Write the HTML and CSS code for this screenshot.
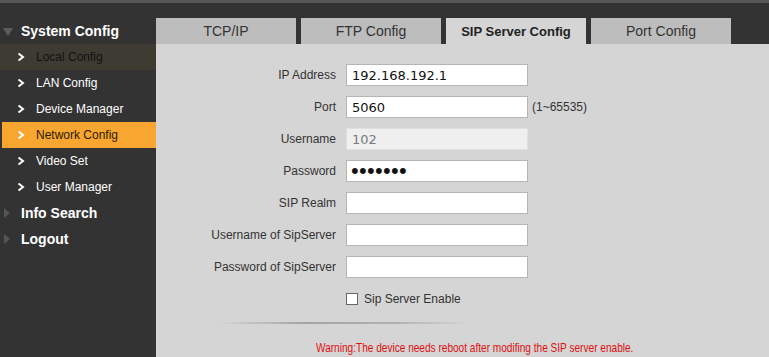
FILE: index.html
```html
<!DOCTYPE html>
<html lang="en">
<head>
    <meta charset="UTF-8" />
    <title>SIP Server Config</title>
    <link rel="stylesheet" href="styles.css">
</head>
<body>

<div class="topbar"></div>

<div class="layout">
    <nav class="sidebar">
        <div class="group open">
            <span class="tri-down"></span>System Config
        </div>
        <a class="item current" href="#"><svg class="chev" width="8" height="10" viewBox="0 0 8 10"><polyline points="1.5,1.5 6,5 1.5,8.5" /></svg>Local Config</a>
        <a class="item" href="#"><svg class="chev" width="8" height="10" viewBox="0 0 8 10"><polyline points="1.5,1.5 6,5 1.5,8.5" /></svg>LAN Config</a>
        <a class="item" href="#"><svg class="chev" width="8" height="10" viewBox="0 0 8 10"><polyline points="1.5,1.5 6,5 1.5,8.5" /></svg>Device Manager</a>
        <a class="item active" href="#"><svg class="chev" width="8" height="10" viewBox="0 0 8 10"><polyline points="1.5,1.5 6,5 1.5,8.5" /></svg>Network Config</a>
        <a class="item" href="#"><svg class="chev" width="8" height="10" viewBox="0 0 8 10"><polyline points="1.5,1.5 6,5 1.5,8.5" /></svg>Video Set</a>
        <a class="item" href="#"><svg class="chev" width="8" height="10" viewBox="0 0 8 10"><polyline points="1.5,1.5 6,5 1.5,8.5" /></svg>User Manager</a>
        <div class="group">
            <span class="tri-right"></span>Info Search
        </div>
        <div class="group">
            <span class="tri-right"></span>Logout
        </div>
    </nav>

    <main class="main">
        <div class="tabs">
            <button class="tab">TCP/IP</button>
            <button class="tab">FTP Config</button>
            <button class="tab active">SIP Server Config</button>
            <button class="tab">Port Config</button>
        </div>

        <div class="panel">
            <form class="sip-form">
                <label for="ip">IP Address</label>
                <input type="text" id="ip" value="192.168.192.1" />
                <span></span>

                <label for="port">Port</label>
                <input type="text" id="port" value="5060" />
                <span class="hint">(1~65535)</span>

                <label for="user">Username</label>
                <input type="text" id="user" value="102" disabled />
                <span></span>

                <label for="pass">Password</label>
                <input type="password" id="pass" class="pass" value="1234567" />
                <span></span>

                <label for="realm">SIP Realm</label>
                <input type="text" id="realm" />
                <span></span>

                <label for="suser">Username of SipServer</label>
                <input type="text" id="suser" />
                <span></span>

                <label for="spass">Password of SipServer</label>
                <input type="text" id="spass" />
                <span></span>

                <span></span>
                <label class="check"><input type="checkbox" /> Sip Server Enable</label>
                <span></span>
            </form>

            <div class="divider"></div>

            <p class="warning">Warning:The device needs reboot after modifing the SIP server enable.</p>
        </div>
    </main>
</div>

</body>
</html>
```

FILE: styles.css
```css
html, body {
    height: 100%;
}
body {
    margin: 0;
    font-family: "Liberation Sans", Arial, sans-serif;
    font-size: 12px;
    background-color: #333333;
    color: #222;
    display: flex;
    flex-direction: column;
    overflow: hidden;
}
.topbar {
    height: 3px;
    background-color: #585858;
}
.layout {
    flex: 1;
    display: flex;
}

/* sidebar */
.sidebar {
    width: 156px;
    padding-top: 15px;
    flex-shrink: 0;
}
.group {
    height: 26px;
    display: flex;
    align-items: center;
    padding-left: 21px;
    position: relative;
    color: #fff;
    font-size: 14px;
    font-weight: bold;
}
.tri-down {
    position: absolute;
    left: 3px;
    top: 10px;
    width: 0;
    height: 0;
    border-left: 5px solid transparent;
    border-right: 5px solid transparent;
    border-top: 8px solid #5e5e5e;
}
.tri-right {
    position: absolute;
    left: 4px;
    top: 8px;
    width: 0;
    height: 0;
    border-top: 5px solid transparent;
    border-bottom: 5px solid transparent;
    border-left: 6px solid #555;
}
.item {
    height: 26px;
    display: flex;
    align-items: center;
    padding-left: 17px;
    color: #fff;
    text-decoration: none;
    font-size: 12px;
}
.item .chev {
    margin-right: 11px;
}
.chev polyline {
    fill: none;
    stroke: #fff;
    stroke-width: 2;
}
.item.current {
    background-color: #3e3c32;
    color: #111;
}
.item.active {
    background-color: #f9a630;
    color: #2a1a00;
    margin-left: 2px;
    padding-left: 15px;
}

/* main */
.main {
    flex: 1;
    display: flex;
    flex-direction: column;
    padding-top: 15px;
}
.tabs {
    display: flex;
    gap: 5px;
    height: 26px;
}
.tab {
    width: 140px;
    border: none;
    padding: 0;
    background-color: #bdbdbd;
    color: #333;
    font-family: "Liberation Sans", Arial, sans-serif;
    font-size: 14px;
    cursor: pointer;
}
.tab.active {
    background-color: #d5d5d5;
    color: #222;
    font-weight: bold;
    font-size: 13px;
}
.panel {
    flex: 1;
    background-color: #d5d5d5;
    padding-top: 20px;
}
.sip-form {
    display: grid;
    grid-template-columns: 180px 182px auto;
    grid-auto-rows: 22px;
    column-gap: 10px;
    row-gap: 10px;
    align-items: center;
}
.sip-form > label {
    text-align: right;
    color: #333;
}
.sip-form input[type="text"],
.sip-form input[type="password"] {
    box-sizing: border-box;
    width: 182px;
    height: 22px;
    margin: 0;
    padding: 0 5px;
    border: 1px solid #b5b5b5;
    background-color: #fff;
    font-family: "DejaVu Sans", Verdana, sans-serif;
    font-size: 13px;
    color: #111;
    outline: none;
}
.sip-form input.pass {
    font-family: "Liberation Sans", Arial, sans-serif;
    font-size: 22px;
    padding: 0 4px;
    letter-spacing: 0.3px;
}
.sip-form input:disabled {
    background-color: #efefef;
    border-color: #e0e0e0;
    color: #7a7a7a;
}
.hint {
    margin-left: -6px;
    color: #333;
}
.sip-form label.check {
    text-align: left;
    display: flex;
    align-items: center;
    gap: 6px;
    color: #333;
}
.check input {
    margin: 0;
    width: 12px;
    height: 12px;
    appearance: none;
    border: 1px solid #666;
    background-color: #fff;
    box-sizing: border-box;
}
.divider {
    margin: 12px 0 0 61px;
    width: 252px;
    height: 2px;
    background: linear-gradient(to right, rgba(180,180,180,0), #a4a4a4 35%, #b0b0b0 70%, rgba(200,200,200,0));
}
.warning {
    display: inline-block;
    margin: 16px 0 0 160px;
    color: #e01010;
    font-size: 13px;
    white-space: nowrap;
    transform: scaleX(0.776);
    transform-origin: left center;
}
```
